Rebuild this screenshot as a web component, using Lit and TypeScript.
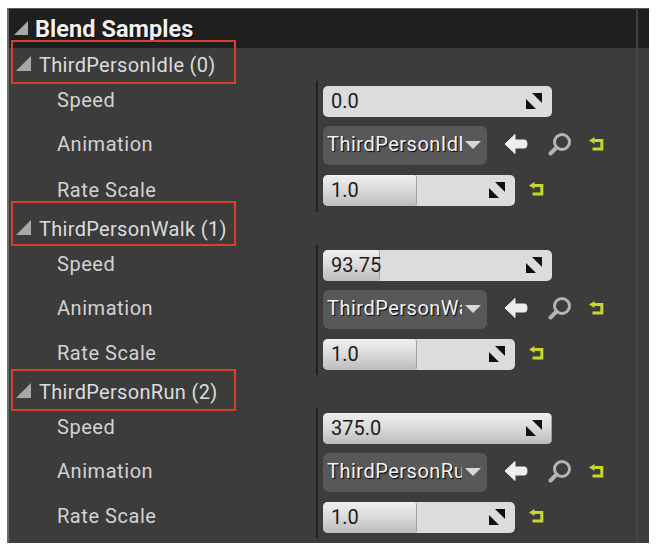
import { LitElement, html, css } from "lit";
import { customElement } from "lit/decorators.js";

const resizeIcon = html`<svg class="resize" viewBox="0 0 16 16" aria-hidden="true"><path d="M6 0H16V10Z" fill="#111"/><path d="M0 6L10 16H0Z" fill="#111"/></svg>`;
const resetIcon = (cls: string) => html`<svg class="reset ${cls}" viewBox="0 0 15 14" aria-hidden="true"><path d="M0 3.5L5.5 0V7Z" fill="#c6d62e"/><path d="M4 3.5H12.8V12H3.5" fill="none" stroke="#c6d62e" stroke-width="3"/></svg>`;
const triangle = (cls: string) => html`<svg class=${cls} viewBox="0 0 14 14" aria-hidden="true"><path d="M14 0V14H0Z" fill="#a8a8a8"/></svg>`;

interface Sample { name: string; index: number; speed: string; fill: number; anim: string; }

const samples: Sample[] = [
  { name: "ThirdPersonIdle", index: 0, speed: "0.0", fill: 0, anim: "ThirdPersonIdle" },
  { name: "ThirdPersonWalk", index: 1, speed: "93.75", fill: 25, anim: "ThirdPersonWalk" },
  { name: "ThirdPersonRun", index: 2, speed: "375.0", fill: 100, anim: "ThirdPersonRun" },
];

@customElement("app-root")
export class AppRoot extends LitElement {
  static styles = css`
    :host {
      display: block;
      width: 657px;
      height: 552px;
      background: #fff;
      font-family: Roboto, "Liberation Sans", sans-serif;
      overflow: hidden;
    }
    .page { padding: 8px 8px 0 7px; }
    .panel {
      position: relative;
      height: 535px;
      box-sizing: border-box;
      background: #3c3c3c;
      border-left: 2px solid #6a6a6a;
    }
    .panel::after {
      content: "";
      position: absolute;
      top: 0;
      bottom: 0;
      right: 11px;
      width: 2px;
      background: #4a4a4a;
      opacity: 0.8;
    }
    .title {
      height: 40px;
      box-sizing: border-box;
      background: #1f1f1f;
      border-top: 1px solid #5c5c5c;
      display: flex;
      align-items: center;
      gap: 7px;
      padding-left: 5px;
      color: #f0f0f0;
      font-weight: 700;
      font-size: 23.6px;
      text-shadow: 1px 1px 1px #000;
    }
    .title-tri { width: 14px; height: 14px; margin-bottom: 2px; }
    .head {
      position: relative;
      height: 33px;
      display: flex;
      align-items: center;
      gap: 8px;
      padding-left: 7px;
      box-sizing: border-box;
      color: #dcdcdc;
      font-size: 20px;
      letter-spacing: 0.32px;
    }
    .head-tri { width: 15px; height: 15px; margin-bottom: 2px; }
    .mark {
      position: absolute;
      left: 2px;
      width: 225px;
      box-sizing: border-box;
      border: 2px solid #d8402e;
      z-index: 2;
      pointer-events: none;
    }
    .mark-0 { top: -8px; height: 44px; }
    .mark-1 { top: -11px; height: 45px; }
    .mark-2 { top: -6px; height: 42px; }
    .grid {
      display: grid;
      grid-template-columns: 307px 1fr;
      grid-template-rows: 40px 48px 42px;
    }
    .first .grid { grid-template-rows: 40px 48px 43px; }
    .label {
      display: flex;
      align-items: center;
      padding: 0 0 2px 48px;
      color: #d2d2d2;
      font-size: 20px;
      letter-spacing: 0.55px;
    }
    .cell {
      display: flex;
      align-items: center;
      border-left: 2px solid #222;
      padding-left: 5px;
    }
    .num {
      position: relative;
      height: 31px;
      box-sizing: border-box;
      background: #dcdcdc;
      border-radius: 5px;
      overflow: hidden;
      display: flex;
      align-items: center;
      color: #1c1c1c;
      font-size: 20px;
      padding: 0 0 1px 8px;
    }
    .num.speed { width: 229px; }
    .num.rate { width: 192px; }
    .fill {
      position: absolute;
      left: 0;
      top: 0;
      bottom: 0;
      box-sizing: border-box;
      background: linear-gradient(#efefef, #dcdcdc 45%, #bcbcbc);
      border-right: 1px solid #a0a0a0;
      border-radius: 0 3px 3px 0;
    }
    .num span { position: relative; }
    .resize {
      position: absolute;
      right: 10px;
      top: 7px;
      width: 16px;
      height: 16px;
    }
    .dd {
      width: 164px;
      height: 39px;
      box-sizing: border-box;
      background: #585858;
      border-radius: 6px;
      display: flex;
      align-items: center;
      padding: 0 0 3px 4px;
      color: #f2f2f2;
      font-size: 20px;
      letter-spacing: 0.5px;
      text-shadow: 1px 1px 1px #000;
    }
    .dd-text { width: 135px; overflow: hidden; white-space: nowrap; }
    .dd-arrow { width: 16px; height: 8px; margin: 3px 0 0 3px; }
    .back { width: 24px; height: 22px; margin: 0 0 2px 17px; }
    .lens { width: 24px; height: 24px; margin: 0 0 2px 20px; }
    .reset { width: 15px; height: 14px; }
    .after-lens { margin: 0 0 3px 17px; }
    .after-num { margin: 0 0 3px 14px; }
  `;

  private row(label: string, value: unknown) {
    return html`<div class="label">${label}</div><div class="cell">${value}</div>`;
  }

  private num(kind: string, text: string, fill: number) {
    return html`<div class="num ${kind}">
      ${fill > 0 ? html`<div class="fill" style="width:${fill}%"></div>` : null}
      <span>${text}</span>${resizeIcon}
    </div>`;
  }

  render() {
    return html`<div class="page"><div class="panel">
      <div class="title">${triangle("title-tri")}<span>Blend Samples</span></div>
      ${samples.map((s, i) => html`
        <section class=${i === 0 ? "first" : ""}>
          <div class="head">
            <div class="mark mark-${i}"></div>
            ${triangle("head-tri")}<span>${s.name} (${s.index})</span>
          </div>
          <div class="grid">
            ${this.row("Speed", this.num("speed", s.speed, s.fill))}
            ${this.row("Animation", html`
              <div class="dd">
                <div class="dd-text">${s.anim}</div>
                <svg class="dd-arrow" viewBox="0 0 16 8" aria-hidden="true"><path d="M0 0H16L8 8Z" fill="#d8d8d8"/></svg>
              </div>
              <svg class="back" viewBox="0 0 24 22" aria-hidden="true"><path d="M1 11L11 1.5V7H21Q23 7 23 11T21 15H11V20.5Z" fill="#eeeeee" stroke="#eeeeee" stroke-linejoin="round"/></svg>
              <svg class="lens" viewBox="0 0 24 24" aria-hidden="true"><circle cx="14" cy="10" r="7.5" fill="none" stroke="#b4b4b4" stroke-width="3"/><path d="M8.5 15.5L2.5 21.5" stroke="#b4b4b4" stroke-width="4" stroke-linecap="round"/></svg>
              ${resetIcon("after-lens")}`)}
            ${this.row("Rate Scale", html`${this.num("rate", "1.0", 49)}${resetIcon("after-num")}`)}
          </div>
        </section>`)}
    </div></div>`;
  }
}
